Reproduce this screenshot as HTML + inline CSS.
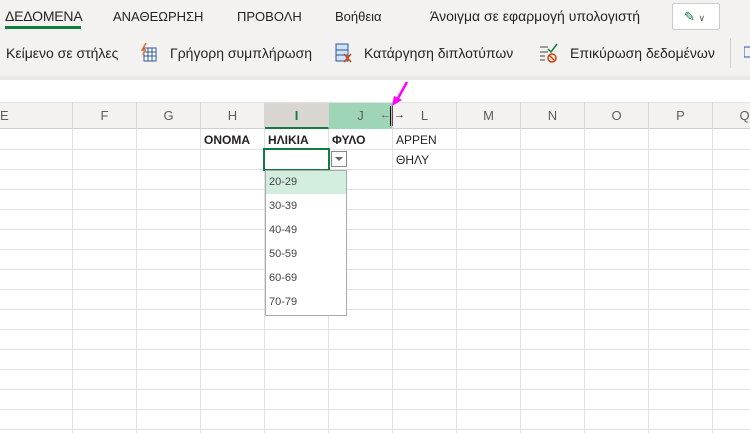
<!DOCTYPE html>
<html><head><meta charset="utf-8"><style>
*{margin:0;padding:0;box-sizing:border-box}
body{width:750px;height:433px;overflow:hidden;background:#fff;font-family:"Liberation Sans",sans-serif;position:relative;color:#252423}
.a{position:absolute;white-space:nowrap}
.t{font-size:13px;top:9px}
.r{font-size:14px;top:45px}
.col{position:absolute;top:103px;height:26px;width:64px;text-align:center;font-size:13px;line-height:26px;color:#605e5c;border-right:1px solid #d6d6d6}
.vl{position:absolute;top:129px;bottom:0;width:1px;background:#e1e1e1}
.hl{position:absolute;left:0;right:0;height:1px;background:#e1e1e1}
.c{position:absolute;font-size:12px}
.it{position:absolute;left:266px;width:80px;height:23px;font-size:11px;line-height:23px;padding-left:3px;color:#444}
</style></head><body>
<div class="a" style="left:0;top:0;width:750px;height:76px;background:#f3f2f1"></div>
<div class="a" style="left:0;top:76px;width:750px;height:4px;background:#e8e8e8"></div>
<div class="a" style="left:0;top:102px;width:750px;height:1px;background:#e1e1e1"></div>
<div class="a t" style="left:5px;font-size:14px;top:8px;letter-spacing:-0.2px">ΔΕΔΟΜΕΝΑ</div>
<div class="a" style="left:5px;top:26px;width:76px;height:3px;background:#107c41"></div>
<div class="a t" style="left:113px">ΑΝΑΘΕΩΡΗΣΗ</div>
<div class="a t" style="left:237px">ΠΡΟΒΟΛΗ</div>
<div class="a t" style="left:335px">Βοήθεια</div>
<div class="a t" style="left:430px;font-size:14px;top:8px">Άνοιγμα σε εφαρμογή υπολογιστή</div>
<div class="a" style="left:672px;top:3px;width:48px;height:27px;background:#fff;border:1px solid #ccc;border-radius:2px;font-size:13px;line-height:25px;padding-left:11px;color:#107c41">✎ <span style="color:#555;font-size:9px">∨</span></div>
<div class="a r" style="left:6px">Κείμενο σε στήλες</div>
<svg class="a" style="left:140px;top:43px" width="18" height="20"><rect x="4" y="5" width="12" height="13" fill="#fff" stroke="#2b579a"/><path d="M4 9H16M4 13H16M8 5V18M12 5V18" stroke="#2b579a"/><path d="M6 0L2 7H5L3 12" stroke="#e8702a" stroke-width="1.5" fill="none"/></svg>
<div class="a r" style="left:170px">Γρήγορη συμπλήρωση</div>
<svg class="a" style="left:334px;top:43px" width="20" height="20"><rect x="2" y="1" width="12" height="17" fill="#cfe3f5" stroke="#2b579a"/><path d="M2 7H14M2 12H14" stroke="#2b579a"/><path d="M10 11L17 19M17 11L10 19" stroke="#d83b01" stroke-width="1.4"/></svg>
<div class="a r" style="left:364px">Κατάργηση διπλοτύπων</div>
<svg class="a" style="left:539px;top:43px" width="20" height="20"><path d="M1 4H9M1 9H9M1 13H6M1 17H6" stroke="#444"/><path d="M9 6L12 9L18 1" stroke="#107c41" stroke-width="1.5" fill="none"/><circle cx="13" cy="15" r="4" fill="none" stroke="#d83b01" stroke-width="1.4"/><path d="M10 12L16 18" stroke="#d83b01" stroke-width="1.4"/></svg>
<div class="a r" style="left:570px">Επικύρωση δεδομένων</div>
<div class="a" style="left:730px;top:38px;width:1px;height:30px;background:#d0d0d0"></div>
<svg class="a" style="left:744px;top:46px" width="10" height="14"><rect x="0" y="1" width="8" height="10" fill="none" stroke="#2b579a"/></svg>
<div class="a" style="left:0;top:103px;width:750px;height:26px;background:#f3f2f1;border-bottom:1px solid #d0d0d0"></div>
<div class="a" style="left:0;top:103px;font-size:13px;line-height:26px;color:#605e5c">E</div>
<div class="a" style="left:72px;top:103px;width:1px;height:26px;background:#d6d6d6"></div>
<div class="col" style="left:73px">F</div>
<div class="col" style="left:137px">G</div>
<div class="col" style="left:201px">H</div>
<div class="col" style="left:265px;background:#d9d5d1;color:#107c41;font-weight:bold;border-bottom:2px solid #107c41">I</div>
<div class="col" style="left:329px;background:#9fd5b7">J</div>
<div class="col" style="left:393px">L</div>
<div class="col" style="left:457px">M</div>
<div class="col" style="left:521px">N</div>
<div class="col" style="left:585px">O</div>
<div class="col" style="left:649px">P</div>
<div class="col" style="left:713px">Q</div>
<div class="a" style="left:380px;top:109px;font-size:11px;color:#7a3a5a">←</div>
<div class="a" style="left:390px;top:106px;width:3px;height:20px;border-left:1px solid #000;border-right:1px solid #7a3a5a"></div>
<div class="a" style="left:394px;top:109px;font-size:11px">→</div>
<svg class="a" style="left:390px;top:80px" width="20" height="32"><path d="M17 2L7 20" stroke="#f0f" stroke-width="2.5"/><path d="M2 26L4 16L12 20Z" fill="#f0f"/></svg>
<div class="vl" style="left:72px"></div><div class="vl" style="left:136px"></div><div class="vl" style="left:200px"></div><div class="vl" style="left:264px"></div><div class="vl" style="left:328px"></div><div class="vl" style="left:392px"></div><div class="vl" style="left:456px"></div><div class="vl" style="left:520px"></div><div class="vl" style="left:584px"></div><div class="vl" style="left:648px"></div><div class="vl" style="left:712px"></div>
<div class="hl" style="top:149px"></div><div class="hl" style="top:169px"></div><div class="hl" style="top:189px"></div><div class="hl" style="top:209px"></div><div class="hl" style="top:229px"></div><div class="hl" style="top:249px"></div><div class="hl" style="top:269px"></div><div class="hl" style="top:289px"></div><div class="hl" style="top:309px"></div><div class="hl" style="top:329px"></div><div class="hl" style="top:349px"></div><div class="hl" style="top:369px"></div><div class="hl" style="top:389px"></div><div class="hl" style="top:409px"></div><div class="hl" style="top:429px"></div>
<div class="c" style="left:204px;top:133px;font-weight:bold">ΟΝΟΜΑ</div>
<div class="c" style="left:268px;top:133px;font-weight:bold">ΗΛΙΚΙΑ</div>
<div class="c" style="left:332px;top:133px;font-weight:bold">ΦΥΛΟ</div>
<div class="c" style="left:396px;top:133px">ΑΡΡΕΝ</div>
<div class="c" style="left:396px;top:153px">ΘΗΛΥ</div>
<div class="a" style="left:263px;top:148px;width:67px;height:23px;border:2px solid #107c41;background:#fff"></div>
<div class="a" style="left:331px;top:151px;width:16px;height:16px;border:1px solid #888;background:#fff"><div style="margin:5px 0 0 3px;width:0;height:0;border-left:4px solid transparent;border-right:4px solid transparent;border-top:4px solid #666"></div></div>
<div class="a" style="left:265px;top:170px;width:82px;height:146px;border:1px solid #aaa;background:#fff"></div>
<div class="it" style="top:171px;background:#d3eedf">20-29</div>
<div class="it" style="top:195px">30-39</div>
<div class="it" style="top:219px">40-49</div>
<div class="it" style="top:243px">50-59</div>
<div class="it" style="top:267px">60-69</div>
<div class="it" style="top:291px">70-79</div>
</body></html>
